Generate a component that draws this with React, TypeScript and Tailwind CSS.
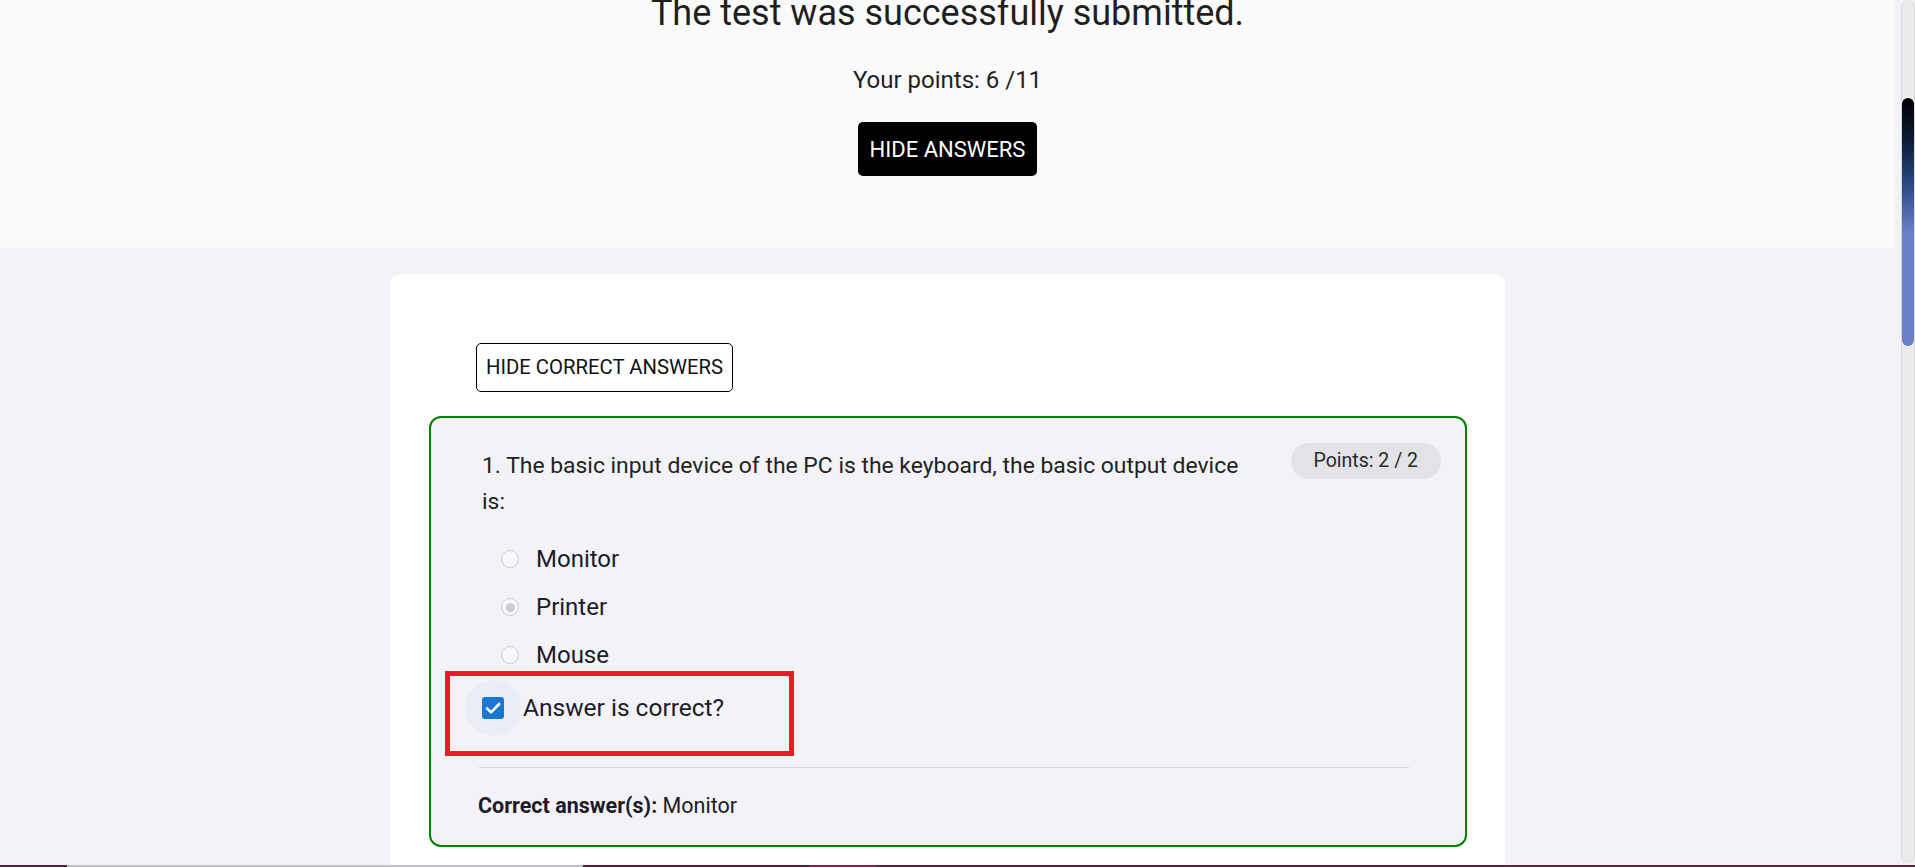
import React from "react";

const options = [
  { label: "Monitor", selected: false },
  { label: "Printer", selected: true },
  { label: "Mouse", selected: false },
];

const Radio = ({ selected }: { selected: boolean }) => {
  return (
    <span className="flex h-[18px] w-[18px] shrink-0 items-center justify-center rounded-full border-[1.5px] border-[#cfcfd3] bg-[#f7f7f9]">
      {selected && <span className="h-[9px] w-[9px] rounded-full bg-[#cdcdd1]" />}
    </span>
  );
};

const Scrollbar = () => {
  return (
    <div className="flex w-[15px] shrink-0 justify-center bg-[#f3f3f7]">
      <div className="flex h-[863px] w-[14px] flex-col rounded-full border-x border-[#d8d8d8] bg-[#ebebeb]">
        <div className="mt-[98px] h-[248px] w-full rounded-full bg-[linear-gradient(to_bottom,#000000_0%,#0d1c3a_18%,#2c4a84_35%,#6a80c9_55%,#6a80c9_100%)]" />
      </div>
    </div>
  );
};

const App = () => {
  return (
    <div className="flex h-[867px] w-full flex-col overflow-hidden font-['Roboto',sans-serif] text-[#1f1f1f]">
      <div className="flex min-h-0 flex-1">
        <main className="flex min-w-0 flex-1 flex-col bg-[#f3f3f7] pr-[5px]">
          <section className="flex h-[248px] shrink-0 flex-col items-center bg-[#fafafa]">
            <h1 className="mt-[-8px] text-[36px] leading-[43px] font-normal">
              The test was successfully submitted.
            </h1>
            <p className="mt-[29px] text-[24px] leading-[32px]">Your points: 6 /11</p>
            <button className="mt-[26px] h-[54px] rounded-[5px] bg-black px-[12px] text-[22px] text-white">
              HIDE ANSWERS
            </button>
          </section>

          <section className="flex-1 pt-[26px]">
            <div className="mx-auto w-[1115px] rounded-[10px] bg-white pt-[69px] pr-[38px] pb-[40px] pl-[39px]">
              <button className="ml-[47px] h-[49px] rounded-[5px] border border-black bg-white px-[9px] text-[20.3px] text-[#111]">
                HIDE CORRECT ANSWERS
              </button>

              <div className="mt-[24px] rounded-[12px] border-2 border-[#008000] bg-[#f3f3f7] pb-[25px]">
                <div className="flex items-start justify-between pt-[25px] pr-[24px] pl-[51px]">
                  <p className="mt-[5px] w-[760px] text-[22.9px] leading-[36px] text-[#222]">
                    1. The basic input device of the PC is the keyboard, the basic output device is:
                  </p>
                  <span className="h-[36px] shrink-0 rounded-full bg-[#e2e2e7] px-[23px] text-[19.5px] leading-[36px] text-[#2b2b2b]">
                    Points: 2 / 2
                  </span>
                </div>

                <div className="mt-[23px] flex flex-col gap-[16px] pl-[70px]">
                  {options.map((option) => (
                    <div key={option.label} className="flex h-[32px] items-center gap-[17px]">
                      <Radio selected={option.selected} />
                      <span className="text-[24px] leading-[32px] text-[#1c1c28]">{option.label}</span>
                    </div>
                  ))}
                </div>

                <div className="ml-[14px] h-[85px] w-[349px] border-[5px] border-[#ed1c24] pt-[4px] pl-[15px]">
                  <div className="flex items-center">
                    <span className="flex h-[56px] w-[56px] items-center justify-center rounded-full bg-[#e8edf7]">
                      <span className="flex h-[22px] w-[22px] items-center justify-center rounded-[3px] bg-[#1976d2]">
                        <svg width="20" height="20" viewBox="0 0 20 20" fill="none">
                          <path d="M4 10.4l4 4L16.2 6" stroke="white" strokeWidth="2.6" strokeLinecap="round" strokeLinejoin="round" />
                        </svg>
                      </span>
                    </span>
                    <span className="ml-[2px] text-[24.5px] leading-[32px] text-[#1c1c28]">Answer is correct?</span>
                  </div>
                </div>

                <div className="mt-[11px] mr-[56px] ml-[48px] h-px bg-[#d6d6da]" />

                <p className="mt-[24px] pl-[47px] text-[21.5px] leading-[28px] text-[#1c1c28]">
                  <span className="font-bold">Correct answer(s):</span> Monitor
                </p>
              </div>
            </div>
          </section>
        </main>
        <Scrollbar />
      </div>

      <div className="flex h-[2px] shrink-0">
        <div className="w-[67px] bg-[#5a1a3a]" />
        <div className="w-[516px] bg-[#c2c1c5]" />
        <div className="w-[227px] bg-[#6b1538]" />
        <div className="w-[66px] bg-[#a3154a]" />
        <div className="flex-1 bg-[#6b1a3a]" />
      </div>
    </div>
  );
};

export default App;
